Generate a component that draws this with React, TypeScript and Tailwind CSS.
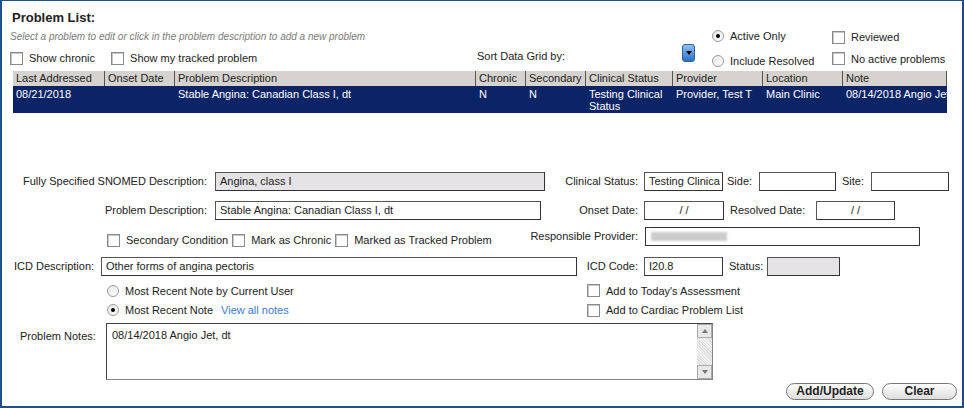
import React from "react";

const Cb = ({ label, className = "" }: { label: string; className?: string }) => (
  <span className={"flex items-center gap-[6px] whitespace-nowrap " + className}>
    <span className="w-[13px] h-[13px] border border-[#8a8a8a] bg-white shadow-[inset_1px_1px_0_#c8c8c8] shrink-0" />
    {label}
  </span>
);
const Rb = ({ label, on, className = "" }: { label: string; on?: boolean; className?: string }) => (
  <span className={"flex items-center gap-[6px] whitespace-nowrap " + className}>
    <span className="w-[12px] h-[12px] rounded-full border border-[#9a9a9a] bg-gradient-to-br from-[#e6e6e6] to-white flex items-center justify-center shrink-0">
      {on && <span className="w-[4px] h-[4px] rounded-full bg-black" />}
    </span>
    {label}
  </span>
);
const Inp = ({ w, v = "", gray, className = "" }: { w: string; v?: string; gray?: boolean; className?: string }) => (
  <div className={`${w} h-[19px] border border-[#333] ${gray ? "bg-[#e6e3e6]" : "bg-white"} border-t-[#555] border-l-[#555] px-[4px] flex items-center whitespace-nowrap overflow-hidden ${className}`}>{v}</div>
);

const cols: [string, number][] = [
  ["Last Addressed", 92], ["Onset Date", 70], ["Problem Description", 301], ["Chronic", 50], ["Secondary", 60],
  ["Clinical Status", 87], ["Provider", 90], ["Location", 80], ["Note", 104],
];
const vals = ["08/21/2018", "", "Stable Angina: Canadian Class I, dt", "N", "N", "Testing Clinical Status", "Provider, Test T", "Main Clinic", "08/14/2018 Angio Jet"];

export default function App() {
  return (
    <div className="w-[964px] h-[408px] bg-white border-x-2 border-t border-b-2 border-[#1d4f8f] text-[11px] text-[#222] relative overflow-hidden" style={{ fontFamily: '"Liberation Sans", Arial, sans-serif' }}>
      <div className="flex">
        <div className="w-[472px] shrink-0">
          <div className="pl-[10px] pt-[7px] font-bold text-[13px] h-[26px]">Problem List:</div>
          <div className="pl-[8px] mt-[2px] italic text-[#7a7a7a] text-[10px]">Select a problem to edit or click in the problem description to add a new problem</div>
          <div className="pl-[8px] mt-[6px] flex gap-[16px]"><Cb label="Show chronic" /><Cb label="Show my tracked problem" /></div>
        </div>
        <div className="pt-[47px] w-[208px] shrink-0 pl-[3px]">Sort Data Grid by:</div>
        <div className="pt-[43px] w-[30px] shrink-0">
          <div className="w-[13px] h-[18px] rounded-[3px] bg-gradient-to-b from-[#8fc0f2] to-[#2a72c8] border border-[#2c5f9e] flex items-center justify-center">
            <span className="w-0 h-0 border-x-[3px] border-x-transparent border-t-[4px] border-t-black" />
          </div>
        </div>
        <div className="pt-[27px] w-[120px] shrink-0 flex flex-col gap-[8px]"><Rb label="Active Only" on /><Rb label="Include Resolved" /></div>
        <div className="pt-[28px] flex flex-col gap-[5px]"><Cb label="Reviewed" /><Cb label="No active problems" /></div>
      </div>
      <div className="ml-[11px] mt-[2px] w-[934px] overflow-hidden">
        <div className="flex h-[15px] bg-[#d6d3ce] leading-[15px]">
          {cols.map(([c, w]) => <div key={c} style={{ width: w }} className="shrink-0 px-[3px] border-r border-[#555] whitespace-nowrap overflow-hidden">{c}</div>)}
        </div>
        <div className="flex h-[27px] bg-[#0b2466] text-white pt-[2px] leading-[12px]">
          {cols.map(([c, w], i) => <div key={c} style={{ width: w }} className="shrink-0 px-[3px] overflow-hidden whitespace-nowrap">{i === 5 ? <>Testing Clinical<br />Status</> : vals[i]}</div>)}
        </div>
      </div>

      <div className="mt-[59px] flex items-center">
        <div className="w-[205px] text-right">Fully Specified SNOMED Description:</div>
        <Inp w="w-[330px] ml-[8px]" v="Angina, class I" gray />
        <div className="w-[93px] text-right">Clinical Status:</div>
        <Inp w="w-[79px] ml-[6px]" v="Testing Clinica" />
        <div className="w-[36px] pl-[4px]">Side:</div>
        <Inp w="w-[77px]" />
        <div className="w-[35px] pl-[6px]">Site:</div>
        <Inp w="w-[78px]" />
      </div>
      <div className="mt-[10px] flex items-center">
        <div className="w-[205px] text-right">Problem Description:</div>
        <Inp w="w-[326px] ml-[8px]" v="Stable Angina: Canadian Class I, dt" />
        <div className="w-[97px] text-right">Onset Date:</div>
        <Inp w="w-[80px] ml-[6px] justify-center" v="/ /" />
        <div className="w-[92px] pl-[6px]">Resolved Date:</div>
        <Inp w="w-[79px] justify-center" v="/ /" />
      </div>
      <div className="mt-[4px] flex items-center">
        <div className="w-[412px] pl-[105px] flex gap-[4px] pt-[8px]">
          <Cb label="Secondary Condition" /><Cb label="Mark as Chronic" /><Cb label="Marked as Tracked Problem" />
        </div>
        <div className="w-[224px] text-right">Responsible Provider:</div>
        <div className="ml-[7px] w-[275px] h-[19px] border border-[#333] bg-white flex items-center px-[5px]"><span className="w-[76px] h-[9px] bg-[#ccc] blur-[1px]" /></div>
      </div>
      <div className="mt-[8px] flex items-center">
        <div className="w-[99px] pl-[12px]">ICD Description:</div>
        <Inp w="w-[476px]" v="Other forms of angina pectoris" />
        <div className="w-[61px] text-right">ICD Code:</div>
        <Inp w="w-[79px] ml-[6px]" v="I20.8" />
        <div className="w-[44px] pl-[6px]">Status:</div>
        <Inp w="w-[73px]" gray />
      </div>
      <div className="mt-[7px] flex">
        <div className="w-[585px] pl-[105px] flex flex-col gap-[3px]">
          <Rb label="Most Recent Note by Current User" />
          <div className="flex items-center gap-[8px]"><Rb label="Most Recent Note" on /><span className="text-[#3a7bd5]">View all notes</span></div>
        </div>
        <div className="flex flex-col gap-[3px]"><Cb label="Add to Today's Assessment" /><Cb label="Add to Cardiac Problem List" /></div>
      </div>
      <div className="mt-[4px] flex">
        <div className="w-[104px] pl-[18px] pt-[5px]">Problem Notes:</div>
        <div className="w-[607px] h-[57px] border border-[#888] border-t-[#444] border-l-[#444] flex">
          <div className="flex-1 px-[5px] pt-[3px]">08/14/2018 Angio Jet, dt</div>
          <div className="w-[15px] flex flex-col bg-[repeating-linear-gradient(45deg,#ddd_0_1px,#f4f4f4_1px_2px)]">
            <div className="h-[14px] bg-[#e8e8e8] border border-[#aaa] flex items-center justify-center"><span className="border-x-[3px] border-x-transparent border-b-[4px] border-b-[#777]" /></div>
            <div className="flex-1" />
            <div className="h-[14px] bg-[#e8e8e8] border border-[#aaa] flex items-center justify-center"><span className="border-x-[3px] border-x-transparent border-t-[4px] border-t-[#777]" /></div>
          </div>
        </div>
      </div>
      <div className="flex justify-end gap-[8px] pr-[5px] mt-[3px]">
        <button className="w-[88px] h-[17px] rounded-full border border-[#777] bg-gradient-to-b from-white to-[#ddd] font-bold text-[12px] leading-[14px]">Add/Update</button>
        <button className="w-[75px] h-[17px] rounded-full border border-[#777] bg-gradient-to-b from-white to-[#ddd] font-bold text-[12px] leading-[14px]">Clear</button>
      </div>
    </div>
  );
}
